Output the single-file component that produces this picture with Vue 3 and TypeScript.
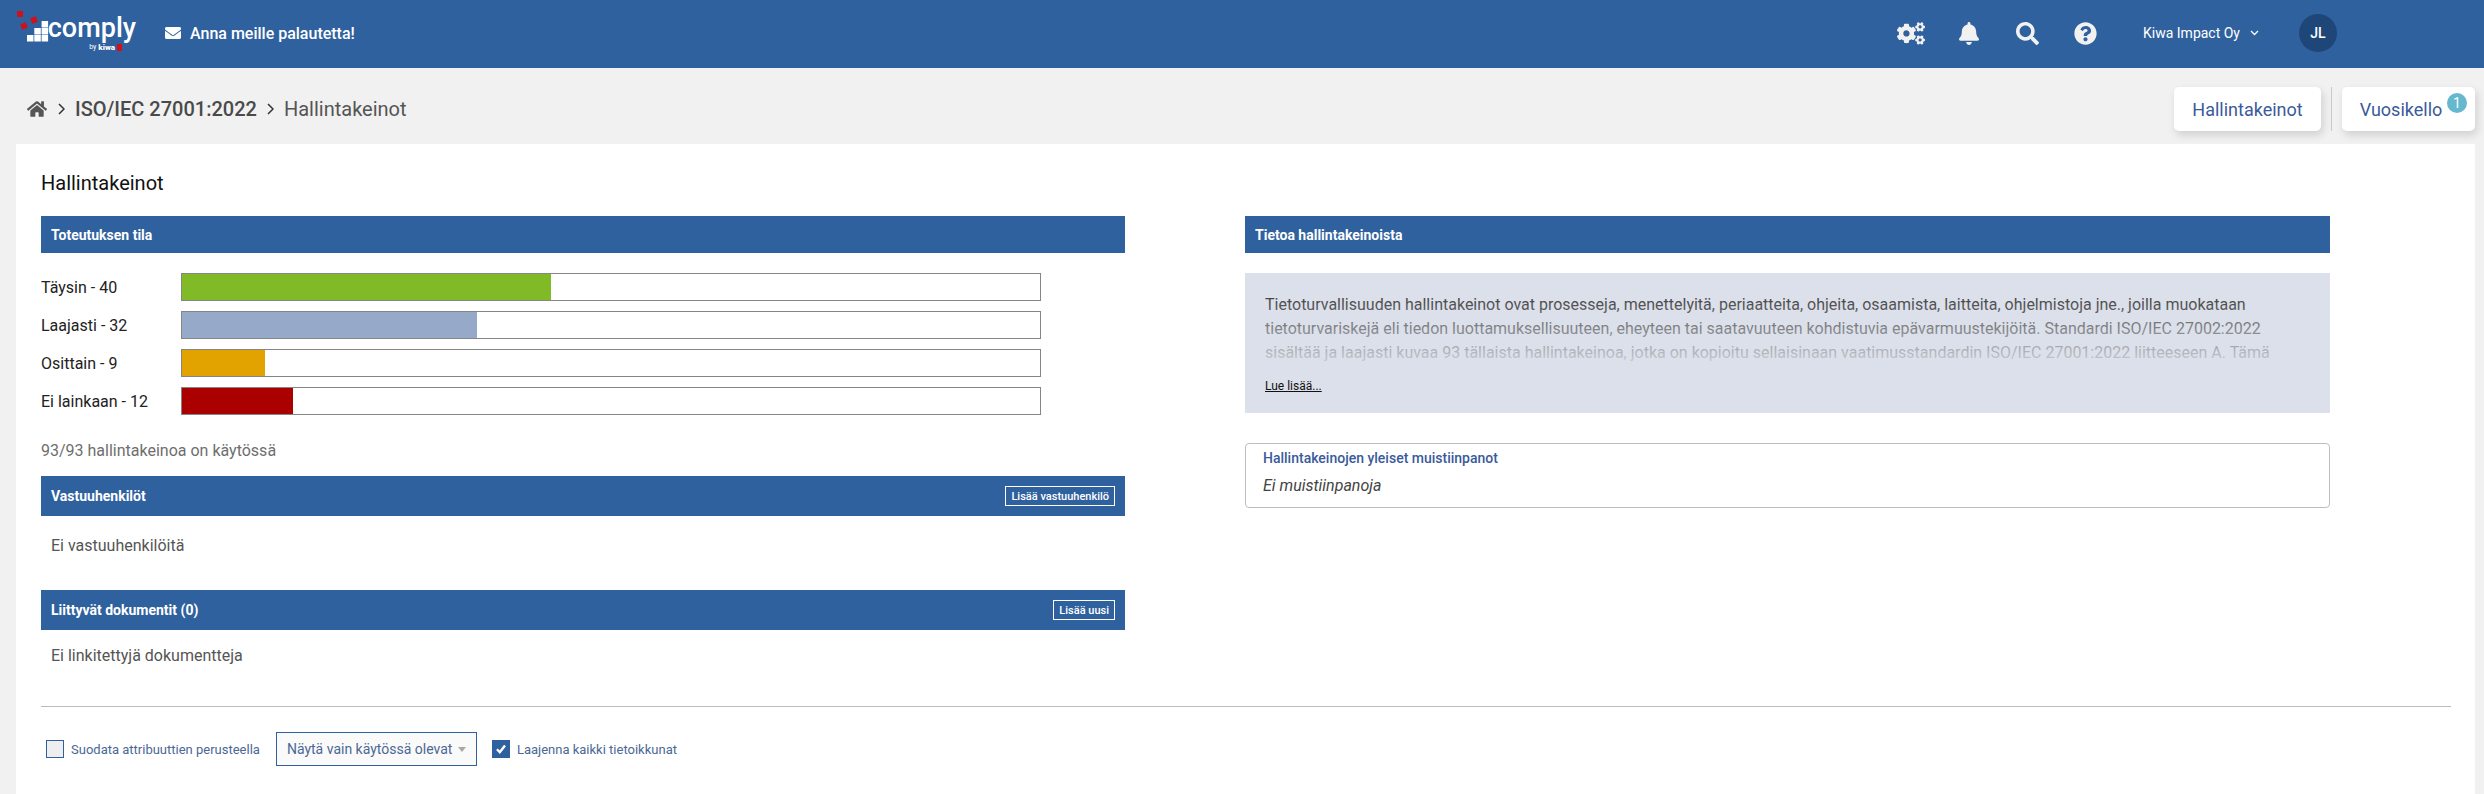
<template>
  <div class="page">
    <header class="topbar">
      <div class="logo">
        <svg class="logo-mark" width="32" height="32" viewBox="0 0 32 32">
          <rect x="0" y="0" width="6" height="6" fill="#d0111b" />
          <rect x="4" y="12" width="6" height="6" fill="#d0111b" transform="rotate(-20 7 15)" />
          <rect x="14" y="6" width="6" height="6" fill="#d0111b" transform="rotate(-20 17 9)" />
          <g fill="#fff">
            <rect x="10" y="24" width="6.5" height="6.5" />
            <rect x="17.3" y="24" width="6.5" height="6.5" />
            <rect x="24.6" y="24" width="6.5" height="6.5" />
            <rect x="17.3" y="17" width="6.5" height="6.5" />
            <rect x="24.6" y="17" width="6.5" height="6.5" />
            <rect x="24.6" y="10" width="6.5" height="6.5" />
          </g>
        </svg>
        <div class="logo-text">
          <span class="logo-name">comply</span>
          <span class="logo-by">by <b>kiwa</b><i class="logo-flag"></i></span>
        </div>
      </div>
      <a class="feedback">
        <svg class="envelope" width="16" height="16" viewBox="0 0 512 512"><path fill="#fff" :d="icons.envelope" /></svg>
        Anna meille palautetta!
      </a>
      <div class="spacer"></div>
      <svg class="top-icon cogs" width="28" height="23" viewBox="0 0 640 512"><path fill="#f1f1f1" :d="icons.cogs" /></svg>
      <svg class="top-icon bell" width="20" height="23" viewBox="0 0 448 512"><path fill="#f1f1f1" :d="icons.bell" /></svg>
      <svg class="top-icon search" width="23" height="23" viewBox="0 0 512 512"><path fill="#f1f1f1" :d="icons.search" /></svg>
      <svg class="top-icon question" width="23" height="23" viewBox="0 0 512 512"><path fill="#f1f1f1" :d="icons.question" /></svg>
      <span class="company">Kiwa Impact Oy</span>
      <svg class="company-chevron" width="9" height="6" viewBox="0 0 9 6"><path d="M1 1l3.5 3.5L8 1" fill="none" stroke="#fff" stroke-width="1.3" /></svg>
      <span class="avatar">JL</span>
    </header>

    <div class="subbar">
      <nav class="crumbs">
        <svg width="20" height="18" viewBox="0 0 576 512"><path fill="#555" :d="icons.home" /></svg>
        <svg class="crumb-sep" width="7" height="12" viewBox="0 0 7 12"><path d="M1 1l5 5-5 5" fill="none" stroke="#333" stroke-width="1.5" /></svg>
        <span class="crumb-strong">ISO/IEC 27001:2022</span>
        <svg class="crumb-sep crumb-sep-last" width="7" height="12" viewBox="0 0 7 12"><path d="M1 1l5 5-5 5" fill="none" stroke="#333" stroke-width="1.5" /></svg>
        <span class="crumb-last">Hallintakeinot</span>
      </nav>
      <div class="tabs">
        <button class="tab tab-first">Hallintakeinot</button>
        <span class="tab-sep"></span>
        <button class="tab tab-second">
          Vuosikello
          <span class="badge">1</span>
        </button>
      </div>
    </div>

    <main class="card">
      <h1 class="title">Hallintakeinot</h1>

      <div class="columns">
        <section class="col">
          <div class="band">Toteutuksen tila</div>
          <div class="bars">
            <div v-for="row in rows" :key="row.label" class="bar-row">
              <span class="bar-label">{{ row.label }} - {{ row.count }}</span>
              <div class="track">
                <div class="fill" :style="{ width: (row.count / total) * 100 + '%', background: row.color }"></div>
              </div>
            </div>
          </div>
          <p class="in-use">93/93 hallintakeinoa on käytössä</p>

          <div class="band band-tall">
            Vastuuhenkilöt
            <button class="band-btn">Lisää vastuuhenkilö</button>
          </div>
          <p class="empty">Ei vastuuhenkilöitä</p>

          <div class="band band-tall">
            Liittyvät dokumentit (0)
            <button class="band-btn">Lisää uusi</button>
          </div>
          <p class="empty empty-docs">Ei linkitettyjä dokumentteja</p>
        </section>

        <section class="col">
          <div class="band">Tietoa hallintakeinoista</div>
          <div class="info">
            <div class="info-text">
              <p>Tietoturvallisuuden hallintakeinot ovat prosesseja, menettelyitä, periaatteita, ohjeita, osaamista, laitteita, ohjelmistoja jne., joilla muokataan tietoturvariskejä eli tiedon luottamuksellisuuteen, eheyteen tai saatavuuteen kohdistuvia epävarmuustekijöitä. Standardi ISO/IEC 27002:2022 sisältää ja laajasti kuvaa 93 tällaista hallintakeinoa, jotka on kopioitu sellaisinaan vaatimusstandardin ISO/IEC 27001:2022 liitteeseen A. Tämä</p>
            </div>
            <a class="read-more">Lue lisää...</a>
          </div>
          <div class="notes">
            <div class="notes-label">Hallintakeinojen yleiset muistiinpanot</div>
            <div class="notes-body">Ei muistiinpanoja</div>
          </div>
        </section>
      </div>

      <hr class="rule" />

      <div class="filters">
        <span class="check"></span>
        <span class="check-label">Suodata attribuuttien perusteella</span>
        <div class="select">
          Näytä vain käytössä olevat
          <i class="caret"></i>
        </div>
        <span class="check check-on">
          <svg width="12" height="12" viewBox="0 0 12 12"><path d="M2 6.2l2.8 3L10 2.5" fill="none" stroke="#fff" stroke-width="2.4" /></svg>
        </span>
        <span class="check-label">Laajenna kaikki tietoikkunat</span>
      </div>
    </main>
  </div>
</template>

<script setup lang="ts">
interface StatusRow {
  label: string
  count: number
  color: string
}

const total = 93

const rows: StatusRow[] = [
  { label: 'Täysin', count: 40, color: '#80ba27' },
  { label: 'Laajasti', count: 32, color: '#97a9c8' },
  { label: 'Osittain', count: 9, color: '#e2a300' },
  { label: 'Ei lainkaan', count: 12, color: '#aa0000' },
]

// Solid icon outlines
const icons = {
  envelope: 'M502.3 190.8c3.9-3.1 9.7-.2 9.7 4.7V400c0 26.5-21.5 48-48 48H48c-26.5 0-48-21.5-48-48V195.6c0-5 5.7-7.8 9.7-4.7 22.4 17.4 52.1 39.5 154.1 113.6 21.1 15.4 56.7 47.8 92.2 47.6 35.7.3 72-32.8 92.3-47.6 102-74.1 131.6-96.3 154-113.7zM256 320c23.2.4 56.6-29.2 73.4-41.4 132.7-96.3 142.8-104.7 173.4-128.7 5.8-4.5 9.2-11.5 9.2-18.9v-19c0-26.5-21.5-48-48-48H48C21.5 64 0 85.5 0 112v19c0 7.4 3.4 14.3 9.2 18.9 30.6 23.9 40.7 32.4 173.4 128.7 16.8 12.2 50.2 41.8 73.4 41.4z',
  bell: 'M224 512c35.32 0 63.97-28.65 63.97-64H160.03c0 35.35 28.65 64 63.97 64zm215.39-149.71c-19.32-20.76-55.47-51.99-55.47-154.29 0-77.7-54.48-139.9-127.94-155.16V32c0-17.67-14.32-32-31.98-32s-31.98 14.33-31.98 32v20.84C118.56 68.1 64.08 130.3 64.08 208c0 102.3-36.15 133.53-55.47 154.29-6 6.45-8.66 14.16-8.61 21.71.11 16.4 12.98 32 32.1 32h383.8c19.12 0 32-15.6 32.1-32 .05-7.55-2.61-15.27-8.61-21.71z',
  search: 'M505 442.7L405.3 343c-4.5-4.5-10.6-7-17-7H372c27.6-35.3 44-79.7 44-128C416 93.1 322.9 0 208 0S0 93.1 0 208s93.1 208 208 208c48.3 0 92.7-16.4 128-44v16.3c0 6.4 2.5 12.5 7 17l99.7 99.7c9.4 9.4 24.6 9.4 33.9 0l28.3-28.3c9.4-9.4 9.4-24.6.1-34zM208 336c-70.7 0-128-57.2-128-128 0-70.7 57.2-128 128-128 70.7 0 128 57.2 128 128 0 70.7-57.2 128-128 128z',
  question: 'M504 256c0 136.997-111.043 248-248 248S8 392.997 8 256C8 119.083 119.043 8 256 8s248 111.083 248 248zM262.655 90c-54.497 0-89.255 22.957-116.549 63.758-3.536 5.286-2.353 12.415 2.715 16.258l34.699 26.31c5.205 3.947 12.621 3.008 16.665-2.122 17.864-22.658 30.113-35.797 57.303-35.797 20.429 0 45.698 13.148 45.698 32.958 0 14.976-12.363 22.667-32.534 33.976C247.128 238.528 216 254.941 216 296v4c0 6.627 5.373 12 12 12h56c6.627 0 12-5.373 12-12v-1.333c0-28.462 83.186-29.647 83.186-106.667 0-58.002-60.165-102-116.531-102zM256 338c-25.365 0-46 20.635-46 46 0 25.364 20.635 46 46 46s46-20.636 46-46c0-25.365-20.635-46-46-46z',
  home: 'M280.37 148.26L96 300.11V464a16 16 0 0 0 16 16l112.06-.29a16 16 0 0 0 15.92-16V368a16 16 0 0 1 16-16h64a16 16 0 0 1 16 16v95.64a16 16 0 0 0 16 16.05L464 480a16 16 0 0 0 16-16V300L295.67 148.26a12.19 12.19 0 0 0-15.3 0zM571.6 251.47L488 182.56V44.05a12 12 0 0 0-12-12h-56a12 12 0 0 0-12 12v72.61L318.47 43a48 48 0 0 0-61 0L4.34 251.47a12 12 0 0 0-1.6 16.9l25.5 31A12 12 0 0 0 45.15 301l235.22-193.74a12.19 12.19 0 0 1 15.3 0L530.9 301a12 12 0 0 0 16.9-1.6l25.5-31a12 12 0 0 0-1.7-16.93z',
  cogs: 'M512.1 191l-8.2 14.3c-3 5.3-9.4 7.5-15.1 5.4-11.8-4.4-22.6-10.7-32.1-18.6-4.6-3.8-5.8-10.5-2.8-15.7l8.2-14.3c-6.9-8-12.3-17.3-15.9-27.4h-16.5c-6 0-11.2-4.3-12.2-10.3-2-12-2.1-24.6 0-37.1 1-6 6.2-10.4 12.2-10.4h16.5c3.6-10.1 9-19.4 15.9-27.4l-8.2-14.3c-3-5.2-1.9-11.9 2.8-15.7 9.5-7.9 20.4-14.2 32.1-18.6 5.7-2.1 12.1.1 15.1 5.4l8.2 14.3c10.5-1.9 21.2-1.9 31.7 0L552 6.3c3-5.3 9.4-7.5 15.1-5.4 11.8 4.4 22.6 10.7 32.1 18.6 4.6 3.8 5.8 10.5 2.8 15.7l-8.2 14.3c6.9 8 12.3 17.3 15.9 27.4h16.5c6 0 11.2 4.3 12.2 10.3 2 12 2.1 24.6 0 37.1-1 6-6.2 10.4-12.2 10.4h-16.5c-3.6 10.1-9 19.4-15.9 27.4l8.2 14.3c3 5.2 1.9 11.9-2.8 15.7-9.5 7.9-20.4 14.2-32.1 18.6-5.7 2.1-12.1-.1-15.1-5.4l-8.2-14.3c-10.4 1.9-21.2 1.9-31.7 0zm-10.5-58.8c38.5 29.6 82.4-14.3 52.8-52.8-38.5-29.7-82.4 14.3-52.8 52.8zM386.3 286.1l33.7 16.8c10.1 5.8 14.5 18.1 10.5 29.1-8.9 24.2-26.4 46.4-42.6 65.8-7.4 8.9-20.2 11.1-30.3 5.3l-29.1-16.8c-16 13.7-34.6 24.6-54.9 31.7v33.6c0 11.6-8.3 21.6-19.7 23.6-24.6 4.2-50.4 4.4-75.9 0-11.5-2-20-11.9-20-23.6V418c-20.3-7.2-38.9-18-54.9-31.7L74 403c-10 5.8-22.9 3.6-30.3-5.3-16.2-19.4-33.3-41.6-42.2-65.7-4-10.9.4-23.2 10.5-29.1l33.3-16.8c-3.9-20.9-3.9-42.4 0-63.4L12 205.8c-10.1-5.8-14.6-18.1-10.5-29 8.9-24.2 26-46.4 42.2-65.8 7.4-8.9 20.2-11.1 30.3-5.3l29.1 16.8c16-13.7 34.6-24.6 54.9-31.7V57.1c0-11.5 8.2-21.5 19.6-23.5 24.6-4.2 50.5-4.4 76-.1 11.5 2 20 11.9 20 23.6v33.6c20.3 7.2 38.9 18 54.9 31.7l29.1-16.8c10-5.8 22.9-3.6 30.3 5.3 16.2 19.4 33.2 41.6 42.1 65.8 4 10.9.1 23.2-10 29.1l-33.7 16.8c3.9 21 3.9 42.5 0 63.5zm-117.6 21.1c59.2-77-28.7-164.9-105.7-105.7-59.2 77 28.7 164.9 105.7 105.7zm243.4 182.7l-8.2 14.3c-3 5.3-9.4 7.5-15.1 5.4-11.8-4.4-22.6-10.7-32.1-18.6-4.6-3.8-5.8-10.5-2.8-15.7l8.2-14.3c-6.9-8-12.3-17.3-15.9-27.4h-16.5c-6 0-11.2-4.3-12.2-10.3-2-12-2.1-24.6 0-37.1 1-6 6.2-10.4 12.2-10.4h16.5c3.6-10.1 9-19.4 15.9-27.4l-8.2-14.3c-3-5.2-1.9-11.9 2.8-15.7 9.5-7.9 20.4-14.2 32.1-18.6 5.7-2.1 12.1.1 15.1 5.4l8.2 14.3c10.5-1.9 21.2-1.9 31.7 0l8.2-14.3c3-5.3 9.4-7.5 15.1-5.4 11.8 4.4 22.6 10.7 32.1 18.6 4.6 3.8 5.8 10.5 2.8 15.7l-8.2 14.3c6.9 8 12.3 17.3 15.9 27.4h16.5c6 0 11.2 4.3 12.2 10.3 2 12 2.1 24.6 0 37.1-1 6-6.2 10.4-12.2 10.4h-16.5c-3.6 10.1-9 19.4-15.9 27.4l8.2 14.3c3 5.2 1.9 11.9-2.8 15.7-9.5 7.9-20.4 14.2-32.1 18.6-5.7 2.1-12.1-.1-15.1-5.4l-8.2-14.3c-10.4 1.9-21.2 1.9-31.7 0zM501.6 431c38.5 29.6 82.4-14.3 52.8-52.8-38.5-29.6-82.4 14.3-52.8 52.8z',
}
</script>

<style>
html,
body {
  margin: 0;
  background: #f1f1f1;
}
</style>

<style scoped>
.page {
  width: 2484px;
  height: 794px;
  overflow: hidden;
  display: flex;
  flex-direction: column;
  background: #f1f1f1;
  font-family: Roboto, "Liberation Sans", sans-serif;
  font-size: 16px;
  color: #333;
}

.topbar {
  flex: none;
  height: 68px;
  box-sizing: border-box;
  padding-bottom: 2px;
  display: flex;
  align-items: center;
  background: #2f619e;
  color: #fff;
}

.logo {
  display: flex;
  margin-left: 17px;
  width: 148px;
  height: 50px;
}

.logo-mark {
  flex: none;
  margin-top: 3px;
}

.logo-text {
  display: flex;
  flex-direction: column;
  align-items: flex-end;
  width: 84px;
  margin-left: 3px;
  margin-top: 7px;
}

.logo-name {
  font-size: 27px;
  font-weight: 500;
  line-height: 26px;
  color: #fff;
}

.logo-by {
  display: flex;
  align-items: center;
  gap: 2px;
  font-size: 7px;
  line-height: 9px;
  margin-right: 14px;
  margin-top: 2px;
}

.logo-by b {
  font-weight: 900;
  font-size: 8px;
}

.logo-flag {
  width: 5px;
  height: 7px;
  background: #d0111b;
}

.feedback {
  display: flex;
  align-items: center;
  color: #fff;
  font-size: 16px;
  font-weight: 500;
}

.envelope {
  margin-right: 9px;
}

.spacer {
  flex: 1;
}

.top-icon {
  flex: none;
}

.cogs {
  margin-right: 34px;
}

.bell {
  margin-right: 37px;
}

.search {
  margin-right: 35px;
}

.question {
  margin-right: 46px;
}

.company {
  font-size: 14px;
  color: #fff;
}

.company-chevron {
  margin-left: 10px;
}

.avatar {
  width: 38px;
  height: 38px;
  margin-left: 40px;
  margin-right: 147px;
  border-radius: 50%;
  background: #1f4679;
  display: flex;
  align-items: center;
  justify-content: center;
  font-size: 14px;
  font-weight: 500;
  color: #fff;
}

.subbar {
  flex: none;
  height: 76px;
  box-sizing: border-box;
  display: flex;
  justify-content: space-between;
  align-items: flex-start;
  padding: 19px 9px 0 27px;
}

.crumbs {
  display: flex;
  align-items: center;
  height: 44px;
  font-size: 20px;
}

.crumb-sep {
  margin: 0 10px 0 11px;
}

.crumb-sep-last {
  margin-left: 10px;
}

.crumb-strong {
  font-weight: 500;
  color: #4a4a4a;
}

.crumb-last {
  color: #555;
}

.tabs {
  display: flex;
  align-items: stretch;
}

.tab {
  position: relative;
  height: 44px;
  border: none;
  border-radius: 5px;
  background: #fff;
  color: #3a5a9b;
  font-family: inherit;
  font-size: 18px;
  padding: 0;
  box-shadow: 2px 4px 8px rgba(0, 0, 0, 0.14);
}

.tab-first {
  width: 147px;
}

.tab-second {
  width: 133px;
  padding-right: 15px;
}

.tab-sep {
  width: 1px;
  margin: 0 10px;
  background: #c8c8c8;
}

.badge {
  position: absolute;
  top: 6px;
  right: 8px;
  width: 20px;
  height: 20px;
  border-radius: 50%;
  background: #66b8cf;
  color: #fff;
  font-size: 14px;
  line-height: 20px;
  text-align: center;
}

.card {
  flex: 1;
  margin: 0 9px 0 16px;
  padding: 0 0 0 25px;
  background: #fff;
}

.title {
  margin: 0 0 18px;
  padding-top: 25px;
  line-height: 29px;
  font-size: 20px;
  font-weight: 400;
  color: #111;
}

.columns {
  display: grid;
  grid-template-columns: 1084px 1085px;
  column-gap: 120px;
  height: 490px;
}

.band {
  display: flex;
  align-items: center;
  justify-content: space-between;
  height: 37px;
  padding: 0 10px;
  box-sizing: border-box;
  background: #2f619e;
  color: #fff;
  font-size: 14px;
  font-weight: 700;
}

.band-tall {
  height: 40px;
}

.bars {
  display: flex;
  flex-direction: column;
  gap: 10px;
  margin-top: 20px;
}

.bar-row {
  display: flex;
  align-items: center;
  height: 28px;
  color: #222;
}

.bar-label {
  width: 140px;
  flex: none;
}

.track {
  width: 860px;
  height: 28px;
  box-sizing: border-box;
  border: 1px solid #858585;
  background: #fff;
}

.fill {
  height: 100%;
}

.in-use {
  margin: 26px 0 0;
  height: 35px;
  line-height: 20px;
  color: #6e6e6e;
}

.band-btn {
  height: 20px;
  padding: 0 5px;
  border: 1px solid #fff;
  background: transparent;
  color: #fff;
  font-family: inherit;
  font-size: 11px;
  font-weight: 500;
}

.empty {
  margin: 0;
  height: 74px;
  padding: 19px 0 0 10px;
  box-sizing: border-box;
  line-height: 22px;
  color: #555;
}

.empty-docs {
  padding-top: 15px;
}

.info {
  height: 140px;
  margin-top: 20px;
  padding: 20px 20px 0;
  box-sizing: border-box;
  background: #dce0ea;
}

.info-text {
  position: relative;
  height: 72px;
  overflow: hidden;
  line-height: 24px;
  color: #3a3a3a;
}

.info-text p {
  margin: 0;
}

.info-text::after {
  content: "";
  position: absolute;
  inset: 0;
  background: linear-gradient(to bottom, rgba(220, 224, 234, 0), rgba(220, 224, 234, 0.9));
}

.read-more {
  display: inline-block;
  margin-top: 13px;
  font-size: 12px;
  line-height: 16px;
  color: #111;
  text-decoration: underline;
}

.notes {
  height: 65px;
  margin-top: 30px;
  padding: 4px 17px;
  box-sizing: border-box;
  border: 1px solid #bdbdbd;
  border-radius: 4px;
}

.notes-label {
  font-size: 14px;
  font-weight: 500;
  line-height: 20px;
  color: #3a5a9b;
}

.notes-body {
  margin-top: 7px;
  font-style: italic;
  line-height: 22px;
  color: #444;
}

.rule {
  width: 2410px;
  height: 1px;
  margin: 0;
  border: none;
  background: #bbb;
}

.filters {
  display: flex;
  align-items: center;
  height: 34px;
  margin-top: 25px;
  padding-left: 5px;
}

.check {
  flex: none;
  width: 18px;
  height: 18px;
  box-sizing: border-box;
  border: 1px solid #2f619e;
  background: #eee;
  display: flex;
  align-items: center;
  justify-content: center;
}

.check-on {
  background: #2f619e;
}

.check-label {
  margin-left: 7px;
  font-size: 13px;
  color: #4a6896;
}

.select {
  display: flex;
  align-items: center;
  height: 34px;
  width: 201px;
  margin: 0 15px 0 16px;
  padding-left: 10px;
  box-sizing: border-box;
  border: 1px solid #2f619e;
  background: #fafafa;
  font-size: 14px;
  color: #4a6896;
}

.caret {
  width: 0;
  height: 0;
  margin-left: 6px;
  border-left: 4.5px solid transparent;
  border-right: 4.5px solid transparent;
  border-top: 5px solid #a8a8a8;
}
</style>
